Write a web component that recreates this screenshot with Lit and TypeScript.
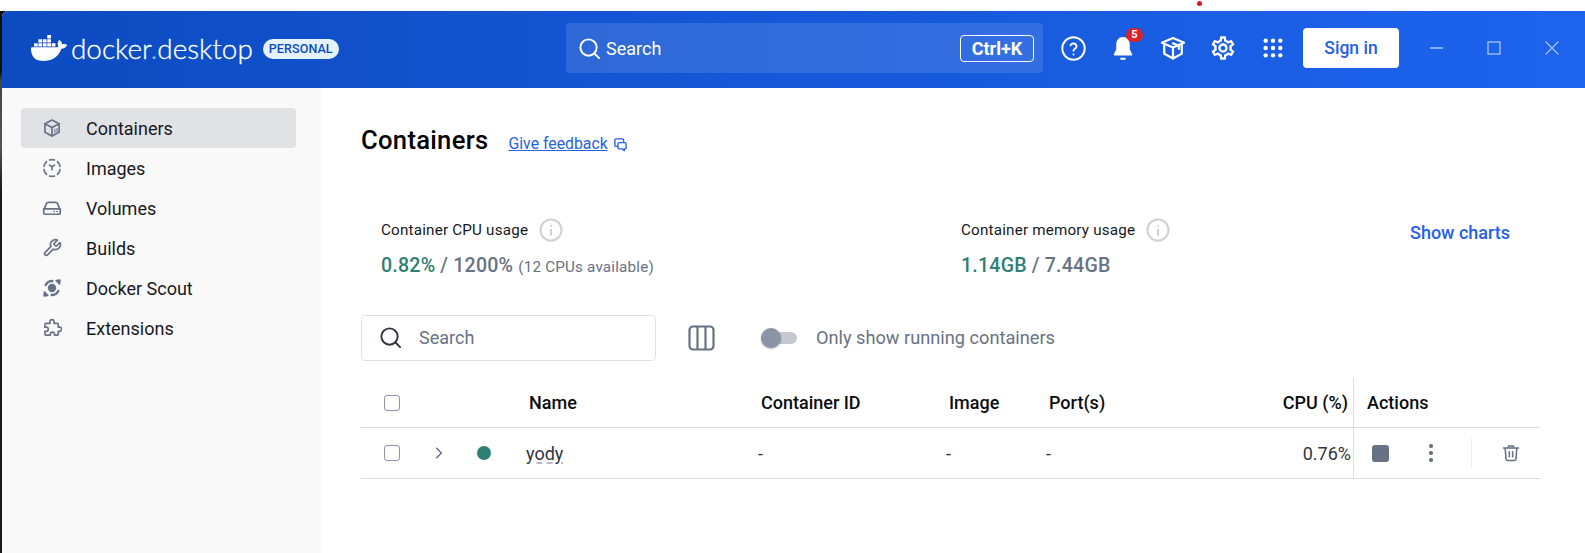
import { LitElement, html, css, svg } from "lit";
import { customElement } from "lit/decorators.js";

const WHALE =
  "M13.983 11.078h2.119a.186.186 0 00.186-.185V9.006a.186.186 0 00-.186-.186h-2.119a.185.185 0 00-.185.185v1.888c0 .102.083.185.185.185m-2.954-5.43h2.118a.186.186 0 00.186-.186V3.574a.186.186 0 00-.186-.185h-2.118a.185.185 0 00-.185.185v1.888c0 .102.082.185.185.186m0 2.716h2.118a.187.187 0 00.186-.186V6.29a.186.186 0 00-.186-.185h-2.118a.185.185 0 00-.185.185v1.887c0 .102.082.185.185.186m-2.93 0h2.12a.186.186 0 00.184-.186V6.29a.185.185 0 00-.185-.185H8.1a.185.185 0 00-.185.185v1.887c0 .102.083.185.185.186m-2.964 0h2.119a.186.186 0 00.185-.186V6.29a.185.185 0 00-.185-.185H5.136a.186.186 0 00-.186.185v1.887c0 .102.084.185.186.186m5.893 2.715h2.118a.186.186 0 00.186-.185V9.006a.186.186 0 00-.186-.186h-2.118a.185.185 0 00-.185.185v1.888c0 .102.082.185.185.185m-2.93 0h2.12a.185.185 0 00.184-.185V9.006a.185.185 0 00-.184-.186h-2.12a.185.185 0 00-.184.185v1.888c0 .102.083.185.185.185m-2.964 0h2.119a.185.185 0 00.185-.185V9.006a.185.185 0 00-.184-.186h-2.12a.186.186 0 00-.186.186v1.887c0 .102.084.185.186.185m-2.92 0h2.12a.185.185 0 00.184-.185V9.006a.185.185 0 00-.184-.186h-2.12a.185.185 0 00-.184.185v1.888c0 .102.082.185.185.185M23.763 9.89c-.065-.051-.672-.51-1.954-.51-.338.001-.676.03-1.01.087-.248-1.7-1.653-2.53-1.716-2.566l-.344-.199-.226.327c-.284.438-.49.922-.612 1.43-.23.97-.09 1.882.403 2.661-.595.332-1.55.413-1.744.42H.751a.751.751 0 00-.75.748 11.376 11.376 0 00.692 4.062c.545 1.428 1.355 2.48 2.41 3.124 1.18.723 3.1 1.137 5.275 1.137.983.003 1.963-.086 2.93-.266a12.248 12.248 0 003.823-1.389c.98-.567 1.86-1.288 2.61-2.136 1.252-1.418 1.998-2.997 2.553-4.4h.221c1.372 0 2.215-.549 2.68-1.009.309-.293.55-.65.707-1.046l.098-.288Z";

const GEAR =
  "M19.43 12.98c.04-.32.07-.64.07-.98 0-.34-.03-.66-.07-.98l2.11-1.65c.19-.15.24-.42.12-.64l-2-3.46c-.09-.16-.26-.25-.44-.25-.06 0-.12.01-.17.03l-2.49 1c-.52-.4-1.08-.73-1.69-.98l-.38-2.65C14.46 2.18 14.25 2 14 2h-4c-.25 0-.46.18-.49.42l-.38 2.65c-.61.25-1.17.59-1.69.98l-2.49-1c-.06-.02-.12-.03-.18-.03-.17 0-.34.09-.43.25l-2 3.46c-.13.22-.07.49.12.64l2.11 1.65c-.04.32-.07.65-.07.98 0 .33.03.66.07.98l-2.11 1.65c-.19.15-.24.42-.12.64l2 3.46c.09.16.26.25.44.25.06 0 .12-.01.17-.03l2.49-1c.52.4 1.08.73 1.69.98l.38 2.65c.03.24.24.42.49.42h4c.25 0 .46-.18.49-.42l.38-2.65c.61-.25 1.17-.59 1.69-.98l2.49 1c.06.02.12.03.18.03.17 0 .34-.09.43-.25l2-3.46c.12-.22.07-.49-.12-.64l-2.11-1.65zm-1.98-1.71c.04.31.05.52.05.73 0 .21-.02.43-.05.73l-.14 1.13.89.7 1.08.84-.7 1.21-1.27-.51-1.04-.42-.9.68c-.43.32-.84.56-1.25.73l-1.06.43-.16 1.13-.2 1.35h-1.4l-.19-1.35-.16-1.13-1.06-.43c-.43-.18-.83-.41-1.23-.71l-.91-.7-1.06.43-1.27.51-.7-1.21 1.08-.84.89-.7-.14-1.13c-.03-.31-.05-.54-.05-.74s.02-.43.05-.73l.14-1.13-.89-.7-1.08-.84.7-1.21 1.27.51 1.04.42.9-.68c.43-.32.84-.56 1.25-.73l1.06-.43.16-1.13.2-1.35h1.39l.19 1.35.16 1.13 1.06.43c.43.18.83.41 1.23.71l.91.7 1.06-.43 1.27-.51.7 1.21-1.07.85-.89.7.14 1.13zM12 8c-2.21 0-4 1.79-4 4s1.79 4 4 4 4-1.79 4-4-1.79-4-4-4zm0 6c-1.1 0-2-.9-2-2s.9-2 2-2 2 .9 2 2-.9 2-2 2z";

const stroke = (size: number, body: unknown, width = 2) => html`<svg
  width=${size}
  height=${size}
  viewBox="0 0 24 24"
  fill="none"
  stroke="currentColor"
  stroke-width=${width}
  stroke-linecap="round"
  stroke-linejoin="round"
>
  ${body}
</svg>`;

const searchIcon = (size: number) =>
  stroke(size, svg`<circle cx="11" cy="11" r="8.5" /><path d="M17.5 17.5 22 22" />`);

const infoIcon = html`<svg width="24" height="24" viewBox="0 0 24 24" fill="none">
  <circle cx="12" cy="12" r="10.5" stroke="#cfd0d3" stroke-width="2" />
  <circle cx="12" cy="7.8" r="1.1" fill="#cfd0d3" />
  <path d="M12 11v6.5" stroke="#cfd0d3" stroke-width="2" />
</svg>`;

const navIcons = {
  box: svg`<path d="M12 2.5 20.5 7v10L12 21.5 3.5 17V7z" /><path d="M3.5 7 12 11.5 20.5 7M12 11.5v10" /><path d="M15.5 13.500v4M18 12.500v4" stroke-width="1.2" />`,
  image: svg`<path d="M9 2.400a9.800 9.800 0 0 1 6 0M18.600 4.400a9.800 9.800 0 0 1 3 5.600M21.600 14a9.800 9.800 0 0 1-3 5.600M5.400 19.600a9.800 9.800 0 0 1-3-5.600M2.400 10a9.800 9.800 0 0 1 3-5.600M9 21.600a9.800 9.800 0 0 0 6 0" /><path d="M9 8.500l3 2 3-2M12 10.500V14" />`,
  volume: svg`<path d="M2 14.500 5.500 6.500a2 2 0 0 1 1.800-1.200h9.400a2 2 0 0 1 1.800 1.200l3.500 8v3a2 2 0 0 1-2 2H4a2 2 0 0 1-2-2z" /><path d="M2 13h20M14.500 16.200h.1M18 16.200h.1" />`,
  wrench: svg`<path d="M14.700 6.300a1 1 0 0 0 0 1.400l1.600 1.600a1 1 0 0 0 1.400 0l3.800-3.800a6 6 0 0 1-7.900 7.900l-6.900 6.900a2.100 2.100 0 0 1-3-3l6.900-6.900a6 6 0 0 1 7.900-7.900z" />`,
  scout: svg`<circle cx="12" cy="12" r="5" fill="currentColor" stroke="none" /><path d="M4 9.500A8.500 8.500 0 0 1 13.500 3.800M20 14.500A8.500 8.500 0 0 1 10.500 20.200" stroke-width="3" stroke-linecap="butt" /><path d="M17 3 21.500 2.500 21 7zM7 21 2.500 21.500 3 17z" fill="currentColor" />`,
  puzzle: svg`<path d="M9.500 4.500a2.500 2.500 0 0 1 5 0V6.500h4a1 1 0 0 1 1 1v3.500h1.500a2.500 2.500 0 0 1 0 5H19.500v3.500a1 1 0 0 1-1 1H15v-1a2.500 2.500 0 0 0-5 0v1H4.500a1 1 0 0 1-1-1V16H5a2.500 2.500 0 0 0 0-5H3.500V7.500a1 1 0 0 1 1-1h5z" />`,
};

const navItems: [string, unknown][] = [
  ["Containers", navIcons.box],
  ["Images", navIcons.image],
  ["Volumes", navIcons.volume],
  ["Builds", navIcons.wrench],
  ["Docker Scout", navIcons.scout],
  ["Extensions", navIcons.puzzle],
];

@customElement("app-root")
export class AppRoot extends LitElement {
  static styles = css`
    :host {
      display: block;
      width: 1585px;
      height: 553px;
      overflow: hidden;
      background: #fff;
      font-family: Roboto, "Liberation Sans", sans-serif;
      color: #17191e;
    }

    .strip {
      height: 11px;
      padding: 1px 0 0 1197px;
      box-sizing: border-box;
    }

    .dot-red {
      width: 5px;
      height: 5px;
      border-radius: 50%;
      background: #e0141c;
    }

    .frame {
      height: 542px;
      display: flex;
      background: linear-gradient(
        180deg,
        #111 0,
        #111 60px,
        #444 70px,
        #555 135px,
        #1a1a1a 180px,
        #1a1a1a 100%
      );
    }

    .window {
      flex: 1;
      min-width: 0;
      margin-left: 2px;
      display: flex;
      flex-direction: column;
      background: #fff;
      border-top-left-radius: 6px;
      overflow: hidden;
    }

    header {
      height: 77px;
      flex: none;
      display: flex;
      align-items: center;
      box-sizing: border-box;
      padding-bottom: 3px;
      color: #fff;
      background: linear-gradient(90deg, #0c4bc0 0%, #1457d6 45%, #1d63ed 100%);
    }

    .logo {
      display: flex;
      align-items: center;
      width: 564px;
      padding-left: 29px;
      box-sizing: border-box;
      flex: none;
    }

    .logo svg {
      fill: #fff;
      margin-right: 4px;
    }

    .wordmark {
      font-family: Lato, sans-serif;
      font-weight: 300;
      font-size: 27.9px;
      line-height: 30px;
      -webkit-text-stroke: 0.3px #fff;
    }

    .wordmark i {
      font-style: normal;
      color: #8fb4f5;
      -webkit-text-stroke: 0.3px #8fb4f5;
    }

    .badge {
      margin-left: 10px;
      margin-top: 2px;
      height: 20px;
      padding: 0 6px;
      border-radius: 10px;
      background: #e5f2fc;
      color: #0c4bc0;
      font-size: 12.5px;
      font-weight: 500;
      letter-spacing: 0.1px;
      line-height: 20px;
    }

    .top-search {
      width: 477px;
      height: 50px;
      flex: none;
      display: flex;
      align-items: center;
      padding: 0 9px 0 12px;
      box-sizing: border-box;
      border-radius: 4px;
      background: rgba(255, 255, 255, 0.12);
      font-size: 18px;
    }

    .top-search svg {
      margin-right: 5px;
    }

    .kbd {
      margin-left: auto;
      width: 74px;
      height: 27px;
      box-sizing: border-box;
      border: 1px solid #fff;
      border-radius: 4px;
      text-align: center;
      font-size: 18px;
      font-weight: 700;
      line-height: 25px;
    }

    .top-icons {
      display: flex;
      align-items: center;
      padding-left: 5px;
    }

    .top-btn {
      width: 50px;
      height: 40px;
      display: flex;
      align-items: center;
      justify-content: center;
      position: relative;
    }

    .count {
      position: absolute;
      top: 0;
      left: 28px;
      width: 17px;
      height: 14px;
      border-radius: 7px;
      background: #d8232f;
      font-size: 11px;
      font-weight: 700;
      line-height: 14px;
      text-align: center;
    }

    .signin {
      margin-left: 5px;
      width: 96px;
      height: 40px;
      border-radius: 4px;
      background: #fff;
      color: #2560e8;
      font-size: 17.5px;
      font-weight: 500;
      line-height: 40px;
      text-align: center;
    }

    .win {
      display: flex;
      align-items: center;
      margin-left: 9px;
      color: #a9c4f5;
    }

    .win span {
      width: 57.5px;
      display: flex;
      justify-content: center;
    }

    .body {
      flex: 1;
      display: flex;
      min-height: 0;
    }

    aside {
      width: 319px;
      flex: none;
      box-sizing: border-box;
      padding: 20px 25px 0 19px;
      background: #f9f9fa;
    }

    .nav {
      height: 40px;
      display: flex;
      align-items: center;
      border-radius: 4px;
      font-size: 18px;
      color: #17191e;
    }

    .nav.active {
      background: #e1e2e6;
    }

    .nav svg {
      flex: none;
      margin: 0 24px 0 21px;
      color: #677285;
    }

    main {
      flex: 1;
      padding: 0 43px 0 40px;
      min-width: 0;
    }

    .title-row {
      display: flex;
      align-items: center;
      height: 40px;
      margin-top: 32px;
    }

    h1 {
      margin: 0;
      font-size: 25.6px;
      font-weight: 500;
      color: #000;
      letter-spacing: 0.3px;
    }

    .feedback {
      margin: 6px 0 0 20px;
      font-size: 15.8px;
      color: #2560e8;
      text-decoration: underline;
    }

    .title-row svg {
      margin: 8px 0 0 5px;
      color: #2560e8;
    }

    .stats {
      display: flex;
      margin-top: 58px;
      padding-left: 20px;
    }

    .stat-cpu {
      width: 580px;
    }

    .stat-mem {
      width: 449px;
    }

    .stat-label {
      display: flex;
      align-items: center;
      gap: 11px;
      height: 24px;
      font-size: 15.2px;
      letter-spacing: 0.2px;
      color: #17191e;
    }

    .stat-value {
      margin-top: 12px;
      font-size: 19.6px;
      font-weight: 500;
      line-height: 24px;
      color: #677285;
      letter-spacing: 0.2px;
    }

    .stat-value b {
      font-weight: 500;
      color: #2e7f74;
    }

    .stat-value small {
      font-size: 15.2px;
      font-weight: 400;
    }

    .charts {
      margin-top: 4px;
      font-size: 18px;
      font-weight: 500;
      color: #2560e8;
    }

    .filters {
      display: flex;
      align-items: center;
      margin-top: 36px;
    }

    .search {
      width: 295px;
      height: 46px;
      box-sizing: border-box;
      display: flex;
      align-items: center;
      padding: 0 0 1px 17px;
      border: 1px solid #e1e2e6;
      border-radius: 4px;
      font-size: 18px;
      color: #677285;
    }

    .search svg {
      color: #30343c;
      margin-right: 17px;
    }

    .columns {
      margin-left: 32px;
      color: #677285;
      display: flex;
    }

    .toggle {
      margin-left: 46px;
      width: 37px;
      height: 20px;
      display: flex;
      align-items: center;
    }

    .toggle-track {
      width: 36px;
      height: 12px;
      border-radius: 6px;
      background: #c4c8d1;
      display: flex;
      align-items: center;
    }

    .toggle-knob {
      width: 20px;
      height: 20px;
      border-radius: 50%;
      background: #8b93a7;
      box-shadow: 0 1px 2px rgba(0, 0, 0, 0.3);
    }

    .toggle-label {
      margin: 0 0 1px 18px;
      font-size: 18.2px;
      color: #677285;
    }

    .table {
      margin-top: 17px;
      display: grid;
      grid-template-columns: 65px 39px 61px 232px 188px 100px 154px 153px 188px;
    }

    .cell {
      display: flex;
      align-items: center;
      font-size: 18px;
      color: #30343c;
      min-width: 0;
    }

    .head {
      height: 50px;
      box-sizing: border-box;
      border-bottom: 1px solid #dcdde1;
      font-weight: 500;
      color: #0b0d10;
      padding-left: 3px;
    }

    .row {
      height: 51px;
      box-sizing: border-box;
      border-bottom: 1px solid #dcdde1;
    }

    .check {
      padding-left: 23px;
    }

    .check span {
      width: 16px;
      height: 16px;
      box-sizing: border-box;
      border: 1.5px solid #8b93a7;
      border-radius: 3px;
    }

    .end {
      justify-content: flex-end;
      padding-left: 0;
    }

    .head.end {
      padding-right: 5px;
    }

    .row.end {
      padding-right: 2px;
    }

    .actions {
      border-left: 1px solid #dcdde1;
      padding-left: 13px;
    }

    .row.actions {
      padding-left: 18px;
    }

    .stop {
      width: 17px;
      height: 17px;
      border-radius: 3px;
      background: #677285;
      flex: none;
    }

    .kebab {
      margin-left: 40px;
      display: flex;
      flex-direction: column;
      gap: 3.5px;
    }

    .kebab span {
      width: 3.5px;
      height: 3.5px;
      border-radius: 50%;
      background: #677285;
    }

    .sep {
      width: 1px;
      height: 30px;
      margin-left: 38px;
      background: #eceef0;
    }

    .trash {
      margin-left: 29px;
      display: flex;
      color: #677285;
    }

    .chev {
      color: #677285;
      padding-left: 6px;
    }

    .status {
      width: 14px;
      height: 14px;
      border-radius: 50%;
      background: #2e7f74;
      margin-left: 12px;
    }

    .yody {
      text-decoration: underline dashed #b9bcc4;
      text-underline-offset: 3px;
    }
  `;

  private topBar() {
    return html`<header>
      <div class="logo">
        <svg width="36" height="36" viewBox="0 0 24 24"><path d=${WHALE} /></svg>
        <span class="wordmark">docker<i>.</i>desktop</span>
        <span class="badge">PERSONAL</span>
      </div>
      <div class="top-search">
        ${searchIcon(23)}
        <span>Search</span>
        <span class="kbd">Ctrl+K</span>
      </div>
      <div class="top-icons">
        <div class="top-btn">
          ${stroke(
            27,
            svg`<circle cx="12" cy="12" r="10" /><path d="M9.300 9.300a2.800 2.800 0 0 1 5.400.9c0 1.900-2.700 2.300-2.700 3.900" /><path d="M12 17.300h.01" />`,
            1.7,
          )}
        </div>
        <div class="top-btn">
          <svg width="28" height="28" viewBox="0 0 24 24" fill="currentColor">
            <path
              d="M12 2.500c-3.600 0-5.800 2.800-5.800 6.300v4.400l-2 4c-.3.700 0 1.200.7 1.200h14.200c.7 0 1-.5.7-1.200l-2-4V8.800c0-3.500-2.200-6.300-5.800-6.300z"
            />
            <rect x="9.700" y="20.300" width="4.600" height="1.700" rx=".5" />
          </svg>
          <span class="count">5</span>
        </div>
        <div class="top-btn">
          ${stroke(
            28,
            svg`<path d="M2.500 7.500 12 3.500l9.500 4-9.500 4z" /><path d="M4.500 8.500v8.500L12 21l7.500-4V8.500" /><path d="M12 11.500V21M12 8l5 1.800v3" />`,
            1.9,
          )}
        </div>
        <div class="top-btn">
          <svg width="28" height="28" viewBox="0 0 24 24" fill="currentColor"><path d=${GEAR} /></svg>
        </div>
        <div class="top-btn">
          <svg width="22" height="22" viewBox="0 0 24 24" fill="currentColor">
            ${[4, 12, 20].map((y) =>
              [4, 12, 20].map((x) => svg`<circle cx=${x} cy=${y} r="2.400" />`),
            )}
          </svg>
        </div>
        <div class="signin">Sign in</div>
        <div class="win">
          <span><svg width="14" height="14" viewBox="0 0 14 14"><path d="M0 7h13" stroke="currentColor" stroke-width="1.500" /></svg></span>
          <span><svg width="14" height="14" viewBox="0 0 14 14" fill="none"><rect x="1" y="1" width="12" height="12" stroke="currentColor" stroke-width="1.300" /></svg></span>
          <span><svg width="14" height="14" viewBox="0 0 14 14"><path d="M.5.5l13 13M13.500.5l-13 13" stroke="currentColor" stroke-width="1.200" /></svg></span>
        </div>
      </div>
    </header>`;
  }

  private sidebar() {
    return html`<aside>
      ${navItems.map(
        ([label, icon], i) =>
          html`<div class="nav ${i === 0 ? "active" : ""}">
            ${stroke(20, icon, 2)}<span>${label}</span>
          </div>`,
      )}
    </aside>`;
  }

  private content() {
    return html`<main>
      <div class="title-row">
        <h1>Containers</h1>
        <span class="feedback">Give feedback</span>
        ${stroke(
          15,
          svg`<path d="M17 7V5a2 2 0 0 0-2-2H5a2 2 0 0 0-2 2v8a2 2 0 0 0 2 2h2" /><path d="M10 9h9a2 2 0 0 1 2 2v6a2 2 0 0 1-2 2h-1v3l-3-3h-5a2 2 0 0 1-2-2v-6a2 2 0 0 1 2-2z" />`,
          2.2,
        )}
      </div>
      <div class="stats">
        <div class="stat-cpu">
          <div class="stat-label">Container CPU usage ${infoIcon}</div>
          <div class="stat-value">
            <b>0.82%</b> / 1200% <small>(12 CPUs available)</small>
          </div>
        </div>
        <div class="stat-mem">
          <div class="stat-label">Container memory usage ${infoIcon}</div>
          <div class="stat-value"><b>1.14GB</b> / 7.44GB</div>
        </div>
        <div class="charts">Show charts</div>
      </div>
      <div class="filters">
        <div class="search">${searchIcon(23)}<span>Search</span></div>
        <div class="columns">
          <svg width="27" height="26" viewBox="0 0 27 26" fill="none" stroke="currentColor" stroke-width="2.200">
            <rect x="1.500" y="1.500" width="24" height="23" rx="3.500" />
            <path d="M9.500 1.500v23M17.500 1.500v23" />
          </svg>
        </div>
        <div class="toggle">
          <div class="toggle-track"><div class="toggle-knob"></div></div>
        </div>
        <span class="toggle-label">Only show running containers</span>
      </div>
      <div class="table">
        <div class="cell head check"><span></span></div>
        <div class="cell head"></div>
        <div class="cell head"></div>
        <div class="cell head">Name</div>
        <div class="cell head">Container ID</div>
        <div class="cell head">Image</div>
        <div class="cell head">Port(s)</div>
        <div class="cell head end">CPU (%)</div>
        <div class="cell head actions">Actions</div>

        <div class="cell row check"><span></span></div>
        <div class="cell row chev">
          ${stroke(14, svg`<path d="M8 4l8 8-8 8" />`, 2.6)}
        </div>
        <div class="cell row"><span class="status"></span></div>
        <div class="cell row"><span class="yody">yody</span></div>
        <div class="cell row">-</div>
        <div class="cell row">-</div>
        <div class="cell row">-</div>
        <div class="cell row end">0.76%</div>
        <div class="cell row actions">
          <span class="stop"></span>
          <span class="kebab"><span></span><span></span><span></span></span>
          <span class="sep"></span>
          <span class="trash">
            ${stroke(
              20,
              svg`<path d="M3 6h18M9 6V3.500h6V6M5 6l1 13a2 2 0 0 0 2 2h8a2 2 0 0 0 2-2l1-13M10 10.500v6M14 10.500v6" />`,
              1.9,
            )}
          </span>
        </div>
      </div>
    </main>`;
  }

  render() {
    return html`<div class="strip"><div class="dot-red"></div></div>
      <div class="frame">
        <div class="window">
          ${this.topBar()}
          <div class="body">${this.sidebar()} ${this.content()}</div>
        </div>
      </div>`;
  }
}
